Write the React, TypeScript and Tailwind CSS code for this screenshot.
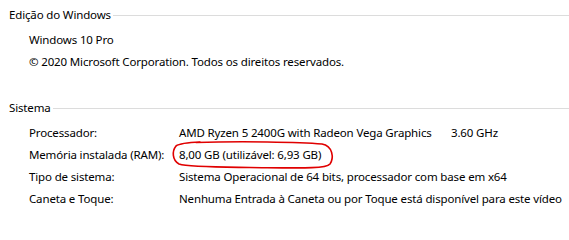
export default function App() {
  const rows: [string, string][] = [
    ['Processador:', ''],
    ['Memória instalada (RAM):', '8,00 GB (utilizável: 6,93 GB)'],
    ['Tipo de sistema:', 'Sistema Operacional de 64 bits, processador com base em x64'],
    ['Caneta e Toque:', 'Nenhuma Entrada à Caneta ou por Toque está disponível para este vídeo'],
  ]

  return (
    <div className="relative w-[569px] h-[222px] bg-white text-[11.5px] tracking-[-0.15px] text-black overflow-hidden font-['Noto_Sans',sans-serif]">
      {/* Edição do Windows */}
      <div className="pt-[4px]">
        <div className="flex items-center h-[22px] pl-[9px]">
          <span className="pr-[2px]">Edição do Windows</span>
          <div className="flex-1 h-px bg-[#dcdcdc]" />
        </div>
        <div className="mt-[3px] pl-[29px]">
          <div className="h-[22px] flex items-center">Windows 10 Pro</div>
          <div className="h-[22px] flex items-center">© 2020 Microsoft Corporation. Todos os direitos reservados.</div>
        </div>
      </div>

      {/* Sistema */}
      <div className="mt-[24px]">
        <div className="flex items-center h-[22px] pl-[9px]">
          <span className="pr-[2px]">Sistema</span>
          <div className="flex-1 h-px bg-[#dcdcdc]" />
        </div>
        <div className="mt-[3px] pl-[29px]">
          {rows.map(([label, value], i) => (
            <div key={label} className="h-[22px] flex items-center whitespace-nowrap">
              <span className="w-[150px] shrink-0">{label}</span>
              {i === 0 ? (
                <>
                  <span className="w-[272px] shrink-0">AMD Ryzen 5 2400G with Radeon Vega Graphics</span>
                  <span>3.60 GHz</span>
                </>
              ) : (
                <span>{value}</span>
              )}
            </div>
          ))}
        </div>
      </div>

      {/* hand-drawn red circle */}
      <svg className="absolute left-0 top-0 pointer-events-none" width="569" height="222" viewBox="0 0 569 222" fill="none">
        <path
          d="M196 142.5 C 240 141, 300 142, 322 144 C 333 146, 334 158, 330 164 C 326 169, 300 168, 250 167.5 C 215 167, 188 167, 179 164 C 172 160, 172 151, 176 146 C 180 143, 188 142.5, 200 142"
          stroke="#e00000"
          strokeWidth="1.6"
          strokeLinecap="round"
        />
      </svg>
    </div>
  )
}
